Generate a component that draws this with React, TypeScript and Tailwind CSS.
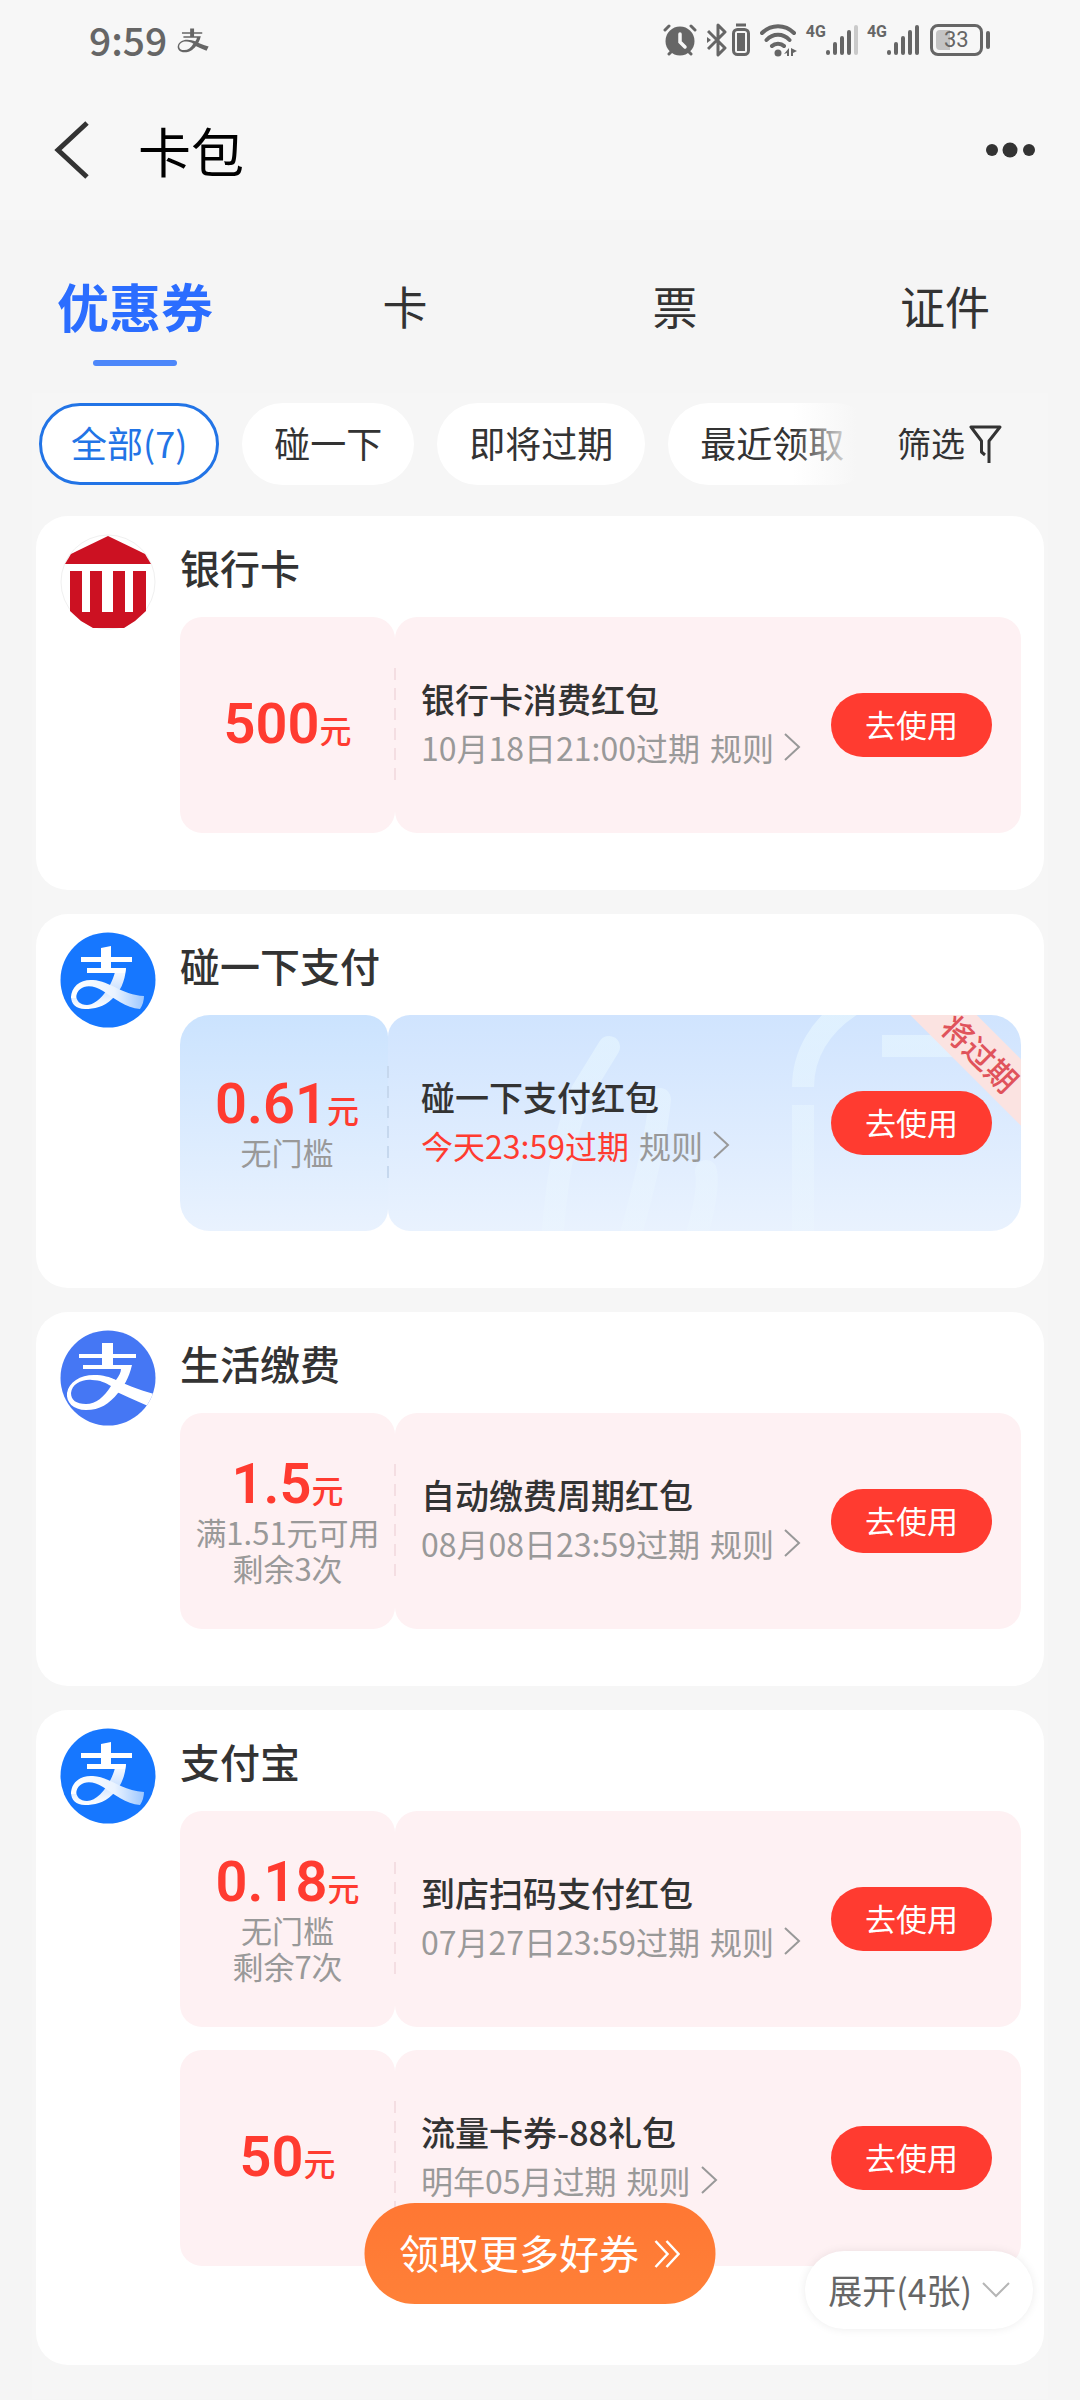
import React from 'react';

type Coupon = {
  amount: string;
  notes?: string[];
  title: string;
  expires: string;
  urgent?: boolean;
};

type Group = {
  name: string;
  logo: React.ReactNode;
  coupons: Coupon[];
  more?: string;
};

const tabs = ['优惠券', '卡', '票', '证件'];
const chips = ['全部(7)', '碰一下', '即将过期', '最近领取'];

function PayGlyph() {
  return (
    <g fill="currentColor">
      <path d="M42 13h11v11h23v4H53v7h19C69 48 63 58 58 63C49 74 40 80 26 80C13 80 6 72 7 63C9 52 20 45 34 45C43 45 50 47 56 50C59 46 61 42 61 39H23v-4h19v-7H19v-4h23z" />
      <path d="M50 48C64 53 78 60 94 64L88 76C74 70 62 64 50 59z" />
    </g>
  );
}

function PayLogo() {
  return (
    <svg viewBox="0 0 96 96" className="size-24">
      <defs>
        <linearGradient id="tail" x1="0" y1="0" x2="1" y2="0">
          <stop offset="0" stopColor="#fff" />
          <stop offset="0.6" stopColor="#eaf3ff" />
          <stop offset="1" stopColor="#9cc7ff" />
        </linearGradient>
        <linearGradient id="stroke" x1="0" y1="0" x2="0" y2="1">
          <stop offset="0" stopColor="#fff" />
          <stop offset="0.5" stopColor="#cfe3ff" />
          <stop offset="1" stopColor="#fff" />
        </linearGradient>
      </defs>
      <circle cx="48" cy="48" r="47.5" fill="#1677ff" />
      <path d="M66 36C65 50 60 60 52 67C44 75 34 77 25 77C16 77 11 72 11 64L16 62C16 69 20 73 27 73C38 73 51 56 55 40z" fill="url(#stroke)" />
      <path d="M41 16L51 14V25H72V30H51V36H66L65 41H27V36H41V30H21V25H41z" fill="#fff" />
      <path d="M11 66C11 54 21 47 33 48C50 49 62 63 84 64Q84 71 80 77C66 76 54 66 43 59C31 51 17 53 16 66z" fill="url(#tail)" />
    </svg>
  );
}

function PayLogoFlat() {
  return (
    <svg viewBox="0 0 96 96" className="size-24 text-white">
      <clipPath id="disc">
        <circle cx="48" cy="48" r="47.5" />
      </clipPath>
      <g clipPath="url(#disc)">
        <rect width="96" height="96" fill="#4577f4" />
        <PayGlyph />
        <path d="M11 63C12 54 22 49 32 50C40 50 46 53 51 56C44 67 36 74 26 74C16 74 11 70 11 63z" fill="#4577f4" />
      </g>
    </svg>
  );
}

function BankLogo() {
  return (
    <svg viewBox="0 0 96 96" className="size-24">
      <circle cx="48" cy="48" r="47" fill="#fff" stroke="#f0f0f0" />
      <path d="M48 2L79 17L85 20L91 30H5L11 20L17 17z" fill="#cc1122" />
      <path d="M10 37H22V78H30V37H42V78H53V37H65V78H73V37H86V77L75 87L64 94H33L21 87L10 77z" fill="#cc1122" />
    </svg>
  );
}

const groups: Group[] = [
  {
    name: '银行卡',
    logo: <BankLogo />,
    coupons: [{ amount: '500', title: '银行卡消费红包', expires: '10月18日21:00过期' }],
  },
  {
    name: '碰一下支付',
    logo: <PayLogo />,
    coupons: [
      { amount: '0.61', notes: ['无门槛'], title: '碰一下支付红包', expires: '今天23:59过期', urgent: true },
    ],
  },
  {
    name: '生活缴费',
    logo: <PayLogoFlat />,
    coupons: [
      { amount: '1.5', notes: ['满1.51元可用', '剩余3次'], title: '自动缴费周期红包', expires: '08月08日23:59过期' },
    ],
  },
  {
    name: '支付宝',
    logo: <PayLogo />,
    coupons: [
      { amount: '0.18', notes: ['无门槛', '剩余7次'], title: '到店扫码支付红包', expires: '07月27日23:59过期' },
      { amount: '50', title: '流量卡券-88礼包', expires: '明年05月过期' },
    ],
    more: '展开(4张)',
  },
];

function Signal({ weak }: { weak?: boolean }) {
  return (
    <div className="flex">
      <span className="font-['Roboto'] text-base leading-4 font-bold">4G</span>
      <svg viewBox="0 0 33 32" className="h-8 w-[33px]" stroke="currentColor" strokeWidth="4" strokeLinecap="round">
        <path d="M2 28v1M9 20v9M16 14v15M23 8v21" />
        <path d="M30 3v26" opacity={weak ? 0.3 : 1} />
      </svg>
    </div>
  );
}

function StatusBar() {
  return (
    <div className="flex h-20 items-center justify-between pr-[90px] pl-[89px] text-[#666]">
      <div className="flex items-center gap-2.5">
        <span className="pb-0.5 text-[39px] leading-none font-medium">9:59</span>
        <svg viewBox="5 12 90 70" className="h-[25px] w-8">
          <PayGlyph />
          <path d="M11 63C12 54 22 49 32 50C40 50 46 53 51 56C44 67 36 74 26 74C16 74 11 70 11 63z" fill="#f7f7f7" />
        </svg>
      </div>
      <div className="flex items-center">
        <svg viewBox="0 0 34 32" className="mr-2.5 h-8 w-[34px]" fill="none" stroke="currentColor" strokeWidth="4" strokeLinecap="round">
          <circle cx="17" cy="17" r="14.5" fill="currentColor" stroke="none" />
          <path d="M2 6l4-4M32 6l-4-4M6 30l3-3M28 30l-3-3" strokeWidth="3" />
          <path d="M17 10v8l5 5" stroke="#f7f7f7" strokeWidth="3.5" />
        </svg>
        <svg viewBox="0 0 43 34" className="mr-2.5 h-[34px] w-[43px]" fill="none" stroke="currentColor" strokeWidth="3" strokeLinejoin="round">
          <path d="M1 8l17 17-7 7V2l7 7L1 26" />
          <path d="M0 14l4 3-4 3z" fill="currentColor" stroke="none" />
          <rect x="26.5" y="6.5" width="15" height="25" rx="4" />
          <rect x="30" y="10" width="8" height="18" fill="currentColor" stroke="none" />
          <path d="M29 2h10" />
        </svg>
        <svg viewBox="0 0 38 33" className="mr-2 h-[33px] w-[38px]" fill="none" stroke="currentColor" strokeWidth="4" strokeLinecap="round">
          <path d="M2 9C11 0 25 0 34 9M6.5 16C13 9 23 9 29.5 16M12 22C15 19 21 19 24 22" />
          <circle cx="18" cy="29" r="3.5" fill="currentColor" stroke="none" />
          <path d="M29 24v8h-2v-3l-3 1zM31 24v8h2v-3l4-2z" fill="currentColor" stroke="none" />
        </svg>
        <Signal weak />
        <div className="w-2" />
        <Signal />
        <div className="ml-2.5 flex items-center gap-[3px]">
          <div className="flex h-8 w-[53px] rounded-lg border-3 border-[#666] p-[3px]">
            <div className="flex h-full w-[14px] items-center rounded-l-sm bg-[#c4c4c4]">
              <span className="ml-2 font-['Roboto'] text-[22px] leading-none">33</span>
            </div>
          </div>
          <div className="h-[18px] w-1 rounded-full bg-[#666]" />
        </div>
      </div>
    </div>
  );
}

function TapArtwork() {
  return (
    <svg
      viewBox="0 0 633 216"
      preserveAspectRatio="xMaxYMid slice"
      className="absolute inset-0 size-full"
      fill="none"
      stroke="url(#fade)"
      strokeWidth="22"
      strokeLinecap="round"
    >
      <defs>
        <linearGradient id="fade" gradientUnits="userSpaceOnUse" x1="0" y1="0" x2="0" y2="216">
          <stop offset="0" stopColor="#e6f6ff" stopOpacity="0.7" />
          <stop offset="1" stopColor="#ecf7ff" stopOpacity="0.3" />
        </linearGradient>
      </defs>
      <path d="M221 32L194 76Q170 130 164 230" />
      <path d="M272 84Q268 130 240 230" />
      <path d="M318 156Q322 176 306 230" />
      <path d="M415 216V90" strokeLinecap="butt" />
      <path d="M415 72C415 40 432 10 464 -10" strokeLinecap="butt" />
      <path d="M494 31H590" strokeLinecap="butt" />
    </svg>
  );
}

function CouponRow({ coupon }: { coupon: Coupon }) {
  const { urgent } = coupon;
  return (
    <article className={`relative flex h-[216px] overflow-hidden ${urgent ? 'rounded-[30px]' : 'rounded-[22px]'}`}>
      <div
        className={`flex shrink-0 flex-col items-center justify-center rounded-r-[22px] pb-0.5 whitespace-nowrap ${
          urgent ? 'w-52 bg-linear-to-b from-[#cbe3fe] to-[#e9f2fe] pl-1.5' : 'w-[215px] bg-[#fef1f3]'
        }`}
      >
        <p className="flex h-[60px] items-baseline text-[#ff3b30]">
          <span className="font-['Roboto'] text-[56px] leading-[60px] font-semibold">{coupon.amount}</span>
          <span className="text-[32px] leading-none font-medium">元</span>
        </p>
        {coupon.notes?.map((note) => (
          <p key={note} className="text-[31px] leading-9 text-[#999]">
            {note}
          </p>
        ))}
      </div>
      <div
        className={`relative flex min-w-0 flex-1 items-center justify-between overflow-hidden rounded-l-[22px] pr-[29px] whitespace-nowrap ${
          urgent ? 'bg-linear-to-b from-[#d0e4fe] to-[#e9f2fe] pl-[33px]' : 'bg-[#fef1f3] pl-[26px]'
        }`}
      >
        {urgent && <TapArtwork />}
        <div className="relative pb-1">
          <h3 className="text-[34px] leading-[48px] font-medium text-[#333]">{coupon.title}</h3>
          <div className="flex items-center text-[32px] leading-[48px] text-[#999]">
            <span className={urgent ? 'text-[#ff3b30]' : ''}>{coupon.expires}</span>
            <a href="#rules" className="ml-2.5 flex items-center gap-2.5">
              规则
              <svg viewBox="0 0 17 28" className="h-7 w-[17px]" fill="none" stroke="currentColor" strokeWidth="2">
                <path d="M1 1l14 13L1 27" />
              </svg>
            </a>
          </div>
        </div>
        {urgent && (
          <span className="absolute top-[14px] right-[-60px] w-[200px] rotate-45 bg-[#fbe3e1] text-center text-[31px] leading-[47px] font-medium text-[#e0535b]">
            将过期
          </span>
        )}
        <button type="button" className="relative h-16 w-[161px] shrink-0 rounded-full bg-[#ff3b30] pb-0.5 text-[31px] text-white">
          去使用
        </button>
      </div>
      <div
        className={`absolute top-[51px] h-[114px] w-0.5 bg-[repeating-linear-gradient(to_bottom,currentColor_0_12px,transparent_12px_20px)] ${
          urgent ? 'left-[207px] text-[#c6d8ee]' : 'left-[214px] text-[#f4dee2]'
        }`}
      />
    </article>
  );
}

function GroupCard({ group }: { group: Group }) {
  return (
    <section
      className={`relative flex gap-6 rounded-[32px] bg-white pr-[23px] pl-6 ${group.more ? 'pb-[99px]' : 'pb-[57px]'}`}
    >
      <div className="shrink-0 pt-[18px]">{group.logo}</div>
      <div className="min-w-0 flex-1 pt-[21px]">
        <h2 className="mb-5 text-[40px] leading-[60px] font-medium text-[#333]">{group.name}</h2>
        <div className="flex flex-col gap-[23px]">
          {group.coupons.map((coupon) => (
            <CouponRow key={coupon.title} coupon={coupon} />
          ))}
        </div>
      </div>
      {group.more && (
        <button
          type="button"
          className="absolute right-[11px] bottom-9 flex h-[78px] items-center gap-2.5 rounded-full bg-white px-[23px] text-[34px] text-[#666] shadow-[0_0_10px_rgba(0,0,0,0.08)]"
        >
          <span className="pb-0.5">{group.more}</span>
          <svg viewBox="0 0 28 16" className="h-4 w-7" fill="none" stroke="#b5b5b5" strokeWidth="2">
            <path d="M1 1l13 13L27 1" />
          </svg>
        </button>
      )}
    </section>
  );
}

export default function App() {
  return (
    <div className="min-h-screen bg-[#f5f5f5] font-['Noto_Sans_CJK_SC',sans-serif]">
      <header className="bg-[#f7f7f7]">
        <StatusBar />
        <div className="flex h-[140px] items-center pr-11 pl-[54px]">
          <button type="button" aria-label="返回" className="text-[#333]">
            <svg viewBox="0 0 36 58" className="h-[58px] w-9" fill="none" stroke="currentColor" strokeWidth="5">
              <path d="M33 2L4 29l29 27" />
            </svg>
          </button>
          <h1 className="ml-12 flex-1 text-[53px] leading-none text-black">卡包</h1>
          <button type="button" aria-label="更多">
            <svg viewBox="0 0 52 16" className="h-4 w-[52px]" fill="#333">
              <circle cx="8" cy="8" r="6" />
              <circle cx="26" cy="8" r="7.5" />
              <circle cx="45" cy="8" r="6" />
            </svg>
          </button>
        </div>
      </header>

      <nav className="grid grid-cols-4 pt-[54px] pb-[27px]">
        {tabs.map((tab, index) => (
          <button key={tab} type="button" className="flex flex-col items-center">
            <span
              className={
                index === 0
                  ? 'text-[52px] leading-[64px] font-bold text-[#2b6dff]'
                  : 'text-[45px] leading-[64px] text-[#333]'
              }
            >
              {tab}
            </span>
            {index === 0 && <span className="mt-[22px] h-1.5 w-[84px] rounded-full bg-[#4d87fa]" />}
          </button>
        ))}
      </nav>

      <main className="mx-8 bg-[#f6f6f6] px-1 pt-2.5 pb-[34px]">
        <div className="flex items-center">
          <div className="relative flex min-w-0 flex-1 gap-[23px] overflow-hidden pl-[3px]">
            {chips.map((chip, index) => (
              <button
                key={chip}
                type="button"
                className={`h-[82px] shrink-0 rounded-full bg-white pb-1 text-[36px] whitespace-nowrap ${
                  index === 0 ? 'border-3 border-[#2274e6] px-[29px] text-[#2274e6]' : 'px-8 text-[#333]'
                }`}
              >
                {chip}
              </button>
            ))}
            <div className="absolute inset-y-0 right-0 w-16 bg-linear-to-r from-transparent to-[#f6f6f6]" />
          </div>
          <button type="button" className="mr-[42px] ml-10 flex shrink-0 items-center gap-1 text-[34px] text-[#333]">
            <span className="pb-1">筛选</span>
            <svg viewBox="0 0 33 38" className="h-[38px] w-[33px]" fill="none" stroke="currentColor" strokeWidth="3">
              <path d="M16 30L12.5 27V16L2 2H31L20 16V38" strokeLinejoin="round" />
            </svg>
          </button>
        </div>

        <div className="mt-[31px] flex flex-col gap-6">
          {groups.map((group) => (
            <GroupCard key={group.name} group={group} />
          ))}
        </div>
      </main>

      <button
        type="button"
        className="fixed bottom-24 left-1/2 flex h-[101px] w-[351px] -translate-x-1/2 items-center justify-center gap-3.5 rounded-full bg-linear-to-b from-[#ff7733] to-[#ff8038] text-[40px] whitespace-nowrap text-white"
      >
        <span className="pb-1">领取更多好券</span>
        <svg viewBox="0 0 28 30" className="h-[30px] w-7" fill="none" stroke="currentColor" strokeWidth="2.5">
          <path d="M2 2l12 13L2 28M13 2l12 13-12 13" />
        </svg>
      </button>
    </div>
  );
}
